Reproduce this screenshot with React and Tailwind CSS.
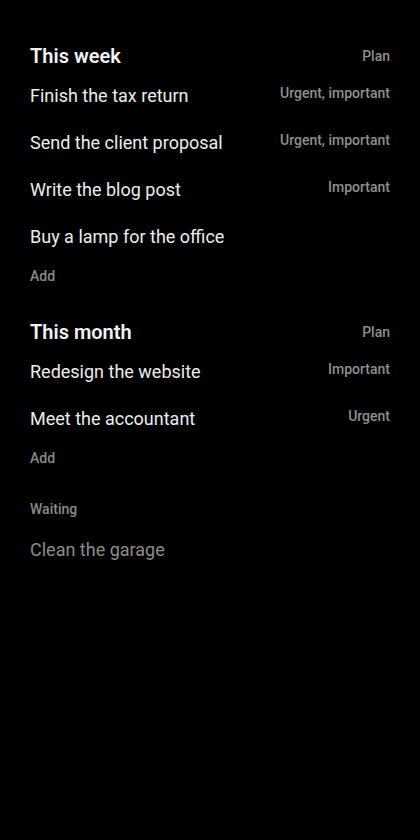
import React from "react";

const week = [
  { title: "Finish the tax return", tag: "Urgent, important" },
  { title: "Send the client proposal", tag: "Urgent, important" },
  { title: "Write the blog post", tag: "Important" },
  { title: "Buy a lamp for the office", tag: "" },
];

const month = [
  { title: "Redesign the website", tag: "Important" },
  { title: "Meet the accountant", tag: "Urgent" },
];

function Section({ title, items }) {
  return (
    <div>
      <div className="flex h-[34px] items-center justify-between pt-[2px]">
        <h2 className="text-[20px] font-semibold text-[#f2f2f2]">{title}</h2>
        <span className="text-[14px] font-medium text-[#8f8f8f]">Plan</span>
      </div>
      {items.map((item) => (
        <div key={item.title} className="flex h-[47px] items-center justify-between">
          <span className="text-[18px] text-[#ededed]">{item.title}</span>
          {item.tag && (
            <span className="pb-[4px] text-[14px] font-medium text-[#8f8f8f]">{item.tag}</span>
          )}
        </div>
      ))}
      <div className="flex h-[30px] items-center pt-[2px]">
        <span className="text-[14px] font-medium text-[#8a8a8a]">Add</span>
      </div>
    </div>
  );
}

export default function App() {
  return (
    <div
      className="min-h-screen bg-black px-[30px] pt-[38px]"
      style={{ fontFamily: 'Roboto, "Noto Sans", sans-serif' }}
    >
      <Section title="This week" items={week} />
      <div className="mt-[24px]">
        <Section title="This month" items={month} />
      </div>
      <div className="mt-[21px] flex h-[30px] items-center pt-[2px]">
        <span className="text-[14px] font-medium text-[#8a8a8a]">Waiting</span>
      </div>
      <div className="mt-[3px] flex h-[47px] items-center">
        <span className="text-[18px] text-[#8c8c8c]">Clean the garage</span>
      </div>
    </div>
  );
}
